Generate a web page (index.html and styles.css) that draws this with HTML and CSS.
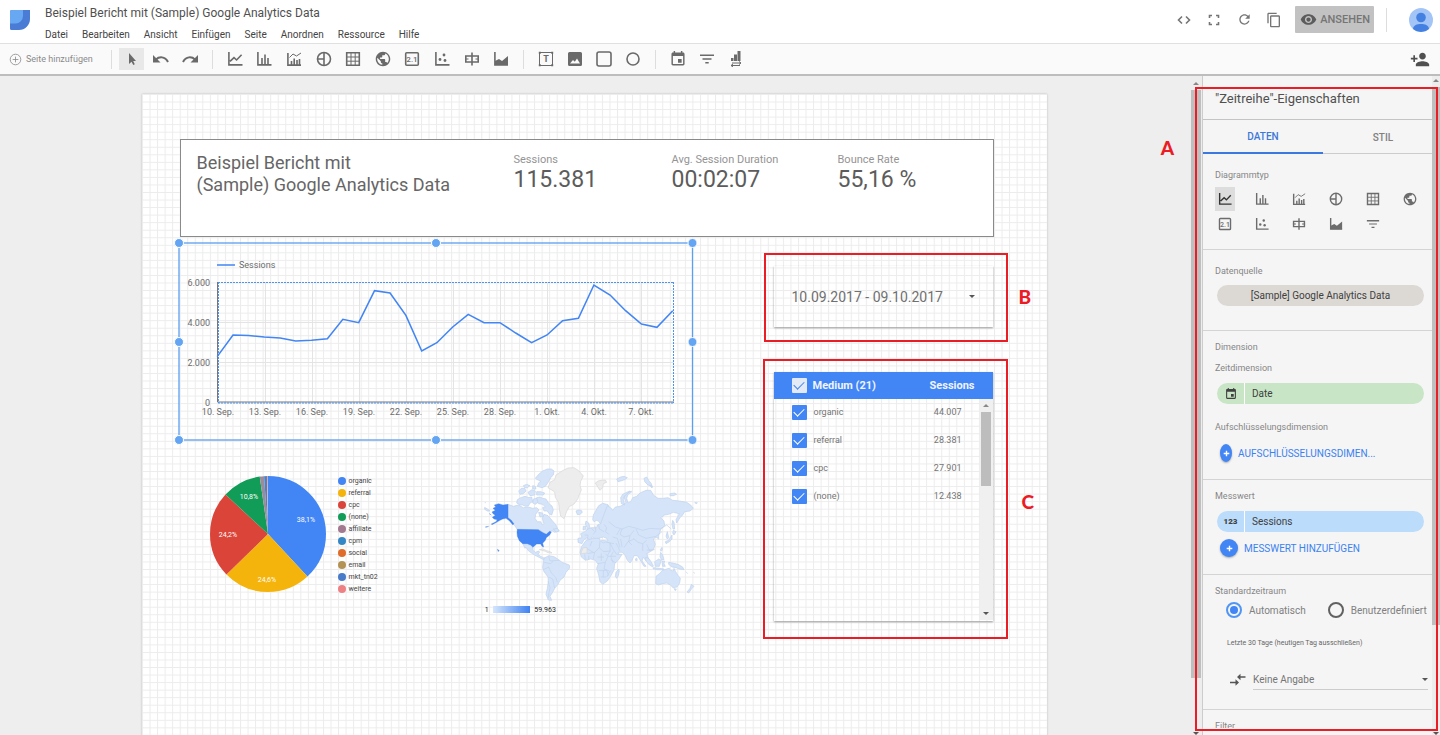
FILE: index.html
```html
<!DOCTYPE html>
<html lang="de">
<head>
<meta charset="utf-8">
<title>Beispiel Bericht mit (Sample) Google Analytics Data</title>
<link rel="stylesheet" href="styles.css">
</head>
<body>
<svg class="sprite" aria-hidden="true">
  <symbol id="i-line" viewBox="0 0 16 16"><path class="s" d="M1.9 1v12.9H15.5M3 10.4 7 6.6l2.6 2.4 5-5.2"/></symbol>
  <symbol id="i-bar" viewBox="0 0 16 16"><path class="s" d="M1.9 1v12.9H15.5M6 13V7M9 13V3.5M12 13V7"/></symbol>
  <symbol id="i-combo" viewBox="0 0 16 16"><path class="s" d="M1.9 2v12.1H15M5.5 14v-4M8.2 14V7.500M11 14V9M13.500 14V8"/><path class="t" d="M3.500 6.500 7 3l3.500 2L15 2"/></symbol>
  <symbol id="i-pie" viewBox="0 0 16 16"><circle class="s" cx="8" cy="8" r="6.500"/><path class="s" d="M8 1.500v13M1.500 8H8"/></symbol>
  <symbol id="i-table" viewBox="0 0 16 16"><path class="s" d="M1.700 1.700h12.600v12.600H1.700z"/><path class="t" d="M6 2v12M10.200 2v12M2 6h12M2 10.200h12"/></symbol>
  <symbol id="i-globe" viewBox="1 1 22 22"><path d="M12 2C6.480 2 2 6.480 2 12s4.480 10 10 10 10-4.480 10-10S17.520 2 12 2zm-1 17.930c-3.950-.49-7-3.850-7-7.930 0-.62.08-1.210.21-1.790L9 15v1c0 1.100.9 2 2 2v1.930zm6.900-2.540c-.26-.81-1-1.390-1.900-1.390h-1v-3c0-.55-.45-1-1-1H8v-2h2c.55 0 1-.45 1-1V7h2c1.100 0 2-.9 2-2v-.41c2.930 1.190 5 4.060 5 7.410 0 2.080-.8 3.970-2.100 5.390z"/></symbol>
  <symbol id="i-score" viewBox="0 0 16 16"><rect class="s" x="1.700" y="1.700" width="12.600" height="12.600" rx="1"/><text x="8" y="11.300" text-anchor="middle" class="glyph">2.1</text></symbol>
  <symbol id="i-scatter" viewBox="0 0 16 16"><path class="s" d="M1.900 1v12.900H15.500"/><circle cx="6" cy="8.500" r="1.400"/><circle cx="10" cy="4" r="1.400"/><circle cx="11" cy="9.500" r="1.400"/></symbol>
  <symbol id="i-bullet" viewBox="0 0 16 16"><path class="s" d="M1.800 5h12.400v6H1.800zM8 1.500v13"/><path d="M1 7.500h3.500v1H1zM11.500 7.500H15v1h-3.500z"/></symbol>
  <symbol id="i-area" viewBox="0 0 16 16"><path class="s" d="M1.900 1v12.900H15"/><path d="M2 14V10l4-2 3 2 6-5v9z"/></symbol>
  <symbol id="i-text" viewBox="0 0 16 16"><path class="t" d="M1.500 1.500h13v13h-13z"/><path d="M.8.800h2v2h-2zM13.200.800h2v2h-2zM.8 13.200h2v2h-2zM13.200 13.200h2v2h-2z"/><text x="8" y="11.300" text-anchor="middle" class="glyph glyph-t">T</text></symbol>
  <symbol id="i-image" viewBox="0 0 16 16"><path fill-rule="evenodd" d="M2.500 1h11A1.500 1.500 0 0 1 15 2.500v11a1.500 1.500 0 0 1-1.500 1.500h-11A1.500 1.500 0 0 1 1 13.500v-11A1.500 1.500 0 0 1 2.500 1zM3 12.500h10l-3-5-2.200 3.200L6 9z"/></symbol>
  <symbol id="i-rect" viewBox="0 0 16 16"><rect class="s" x="1" y="1" width="14" height="14" rx="2"/></symbol>
  <symbol id="i-circle" viewBox="0 0 16 16"><circle class="s" cx="8" cy="8" r="6"/></symbol>
  <symbol id="i-event" viewBox="2 1 20 22"><path d="M17 12h-5v5h5v-5zM16 1v2H8V1H6v2H5c-1.110 0-1.990.9-1.990 2L3 19c0 1.100.89 2 2 2h14c1.100 0 2-.9 2-2V5c0-1.100-.9-2-2-2h-1V1h-2zm3 18H5V8h14v11z"/></symbol>
  <symbol id="i-filter" viewBox="0 0 16 16"><path d="M1 3.500h14V5H1zM3.500 7.300h9v1.400h-9zM6.300 11h3.400v1.500H6.300z"/></symbol>
  <symbol id="i-manage" viewBox="0 0 16 16"><path d="M9.500 0h3v10h-3zM6 3.500h3V10H6zM3 7h2.500v3H3z"/><path class="t" d="M4 12h9M11 10.500l2 1.500-2 1.500M12 14.500H3M5 13l-2 1.500L5 16"/></symbol>
  <symbol id="i-undo" viewBox="0 0 18 16"><path class="w" d="M4 8.500C7 5.500 13 5 16 11"/><path d="M1 4v7.500h7.500z"/></symbol>
  <symbol id="i-redo" viewBox="0 0 18 16"><path class="w" d="M14 8.500C11 5.500 5 5 2 11"/><path d="M17 4v7.500H9.500z"/></symbol>
  <symbol id="i-cursor" viewBox="0 0 16 16"><path d="M5 2v11l2.500-2.300L9.300 14l1.500-.8L9.200 10H12z"/></symbol>
  <symbol id="i-addpage" viewBox="0 0 16 16"><circle class="t" cx="8" cy="8" r="6.500"/><path class="t" d="M8 4.500v7M4.500 8h7"/></symbol>
  <symbol id="i-code" viewBox="0 0 16 16"><path class="s" d="M6 4.500 2.500 8 6 11.500M10 4.500 13.500 8 10 11.500"/></symbol>
  <symbol id="i-full" viewBox="0 0 16 16"><path class="s" d="M6 3.500H3.500V6M10 3.500h2.500V6M6 12.500H3.500V10M10 12.500h2.500V10"/></symbol>
  <symbol id="i-refresh" viewBox="2 2 20 20"><path d="M17.650 6.350C16.200 4.900 14.210 4 12 4c-4.420 0-7.990 3.580-7.990 8s3.570 8 7.990 8c3.730 0 6.840-2.550 7.730-6h-2.080c-.82 2.330-3.040 4-5.650 4-3.310 0-6-2.690-6-6s2.690-6 6-6c1.660 0 3.140.69 4.220 1.780L13 11h7V4l-2.350 2.350z"/></symbol>
  <symbol id="i-copy" viewBox="1 0 22 24"><path d="M16 1H4c-1.100 0-2 .9-2 2v14h2V3h12V1zm3 4H8c-1.100 0-2 .9-2 2v14c0 1.100.9 2 2 2h11c1.100 0 2-.9 2-2V7c0-1.100-.9-2-2-2zm0 16H8V7h11v14z"/></symbol>
  <symbol id="i-eye" viewBox="0 3 24 18"><path d="M12 4.500C7 4.500 2.730 7.610 1 12c1.730 4.390 6 7.500 11 7.500s9.270-3.110 11-7.500c-1.730-4.390-6-7.500-11-7.500zM12 17c-2.760 0-5-2.240-5-5s2.240-5 5-5 5 2.240 5 5-2.240 5-5 5zm0-8c-1.660 0-3 1.340-3 3s1.340 3 3 3 3-1.340 3-3-1.340-3-3-3z"/></symbol>
  <symbol id="i-adduser" viewBox="0 3 24 18"><path d="M15 12c2.210 0 4-1.790 4-4s-1.790-4-4-4-4 1.790-4 4 1.790 4 4 4zm-9-2V7H4v3H1v2h3v3h2v-3h3v-2H6zm9 4c-2.670 0-8 1.340-8 4v2h16v-2c0-2.660-5.330-4-8-4z"/></symbol>
  <symbol id="i-compare" viewBox="0 0 16 16"><path class="s" d="M15.500 5H9.500M0 10.500H6"/><path d="M10.500 1.800V8.200L7 5zM5.500 7.300v6.400L9 10.500z"/></symbol>
  <symbol id="i-plus" viewBox="0 0 10 10"><path class="w" d="M5 1v8M1 5h8"/></symbol>
</svg>

<header class="header">
  <svg class="logo" viewBox="0 0 20 20" aria-hidden="true">
    <path d="M1.500 0H20v9A11 11 0 0 1 9 20H1.500A1.500 1.500 0 0 1 0 18.500v-17A1.500 1.500 0 0 1 1.500 0z" fill="#4a7cd6"/>
    <path d="M1.500 0H13v6A7.500 7.500 0 0 1 5.500 13.500H0v-12A1.500 1.500 0 0 1 1.500 0z" fill="#68a8f3"/>
  </svg>
  <div class="heading">
    <h1 class="doc-title">Beispiel Bericht mit (Sample) Google Analytics Data</h1>
    <nav class="menu">
      <button>Datei</button><button>Bearbeiten</button><button>Ansicht</button><button>Einfügen</button><button>Seite</button><button>Anordnen</button><button>Ressource</button><button>Hilfe</button>
    </nav>
  </div>
  <div class="actions">
    <button class="action" aria-label="Einbetten"><svg class="icon"><use href="#i-code"/></svg></button>
    <button class="action" aria-label="Vollbild"><svg class="icon"><use href="#i-full"/></svg></button>
    <button class="action" aria-label="Aktualisieren"><svg class="icon icon-s"><use href="#i-refresh"/></svg></button>
    <button class="action" aria-label="Kopieren"><svg class="icon"><use href="#i-copy"/></svg></button>
    <button class="view-btn"><svg class="eye"><use href="#i-eye"/></svg>ANSEHEN</button>
    <span class="action-sep"></span>
    <svg class="avatar" viewBox="0 0 24 24" role="img" aria-label="Konto"><circle cx="12" cy="12" r="12" fill="#a3c4f6"/><circle cx="12" cy="9.500" r="4.800" fill="#4380e2"/><path d="M4 20.900C4.500 17 8 16 12 16s7.500 1 8 4.900A12 12 0 0 1 4 20.900z" fill="#4380e2"/></svg>
  </div>
</header>

<div class="toolbar">
  <button class="add-page"><svg class="icon-xs"><use href="#i-addpage"/></svg>Seite hinzufügen</button>
  <span class="sep sep-first"></span>
  <div class="tools tools-3">
    <button class="tool active" aria-label="Auswählen"><svg class="icon"><use href="#i-cursor"/></svg></button>
    <button class="tool" aria-label="Rückgängig"><svg class="icon icon-w"><use href="#i-undo"/></svg></button>
    <button class="tool" aria-label="Wiederholen"><svg class="icon icon-w"><use href="#i-redo"/></svg></button>
  </div>
  <span class="sep"></span>
  <div class="tools tools-10">
    <button class="tool" aria-label="Zeitreihe"><svg class="icon"><use href="#i-line"/></svg></button>
    <button class="tool" aria-label="Balkendiagramm"><svg class="icon"><use href="#i-bar"/></svg></button>
    <button class="tool" aria-label="Kombinationsdiagramm"><svg class="icon"><use href="#i-combo"/></svg></button>
    <button class="tool" aria-label="Kreisdiagramm"><svg class="icon"><use href="#i-pie"/></svg></button>
    <button class="tool" aria-label="Tabelle"><svg class="icon"><use href="#i-table"/></svg></button>
    <button class="tool" aria-label="Karte"><svg class="icon"><use href="#i-globe"/></svg></button>
    <button class="tool" aria-label="Kurzübersicht"><svg class="icon"><use href="#i-score"/></svg></button>
    <button class="tool" aria-label="Streudiagramm"><svg class="icon"><use href="#i-scatter"/></svg></button>
    <button class="tool" aria-label="Bullet-Diagramm"><svg class="icon"><use href="#i-bullet"/></svg></button>
    <button class="tool" aria-label="Flächendiagramm"><svg class="icon"><use href="#i-area"/></svg></button>
  </div>
  <span class="sep"></span>
  <div class="tools tools-4">
    <button class="tool" aria-label="Text"><svg class="icon"><use href="#i-text"/></svg></button>
    <button class="tool" aria-label="Bild"><svg class="icon"><use href="#i-image"/></svg></button>
    <button class="tool" aria-label="Rechteck"><svg class="icon"><use href="#i-rect"/></svg></button>
    <button class="tool" aria-label="Kreis"><svg class="icon"><use href="#i-circle"/></svg></button>
  </div>
  <span class="sep"></span>
  <div class="tools tools-3">
    <button class="tool" aria-label="Zeitraum"><svg class="icon"><use href="#i-event"/></svg></button>
    <button class="tool" aria-label="Filter"><svg class="icon"><use href="#i-filter"/></svg></button>
    <button class="tool" aria-label="Datensteuerung"><svg class="icon"><use href="#i-manage"/></svg></button>
  </div>
  <button class="share" aria-label="Freigeben"><svg class="share-icon"><use href="#i-adduser"/></svg></button>
</div>

<main class="workspace">
  <section class="stage">
    <div class="canvas">
      <svg class="grid" aria-hidden="true">
        <defs><pattern id="dots" width="7.540" height="7.540" patternUnits="userSpaceOnUse"><path d="M0 .5H8M.5 0V8" stroke="#ececec" stroke-width="1"/></pattern></defs>
        <rect width="100%" height="100%" fill="url(#dots)"/>
      </svg>

      <section class="summary">
        <h2 class="summary-title">Beispiel Bericht mit<br>(Sample) Google Analytics Data</h2>
        <dl class="metric metric-1"><dt>Sessions</dt><dd>115.381</dd></dl>
        <dl class="metric metric-2"><dt>Avg. Session Duration</dt><dd>00:02:07</dd></dl>
        <dl class="metric"><dt>Bounce Rate</dt><dd>55,16 %</dd></dl>
      </section>

      <svg class="series" viewBox="-6 -6 526 209" role="img" aria-label="Sessions Zeitreihe">
        <g stroke="#e4e4e4"><path d="M86.500 39v120M133.500 39v120M180.500 39v120M227.500 39v120M274.500 39v120M321.500 39v120M368.500 39v120M415.500 39v120M462.500 39v120M39 79.500h456M39 119.500h456"/></g>
        <path d="M38.500 39v120H495" class="axis"/>
        <path d="M39 39.500H495M494.500 39v121M39 160H495M39.500 39v121" class="dotted"/>
        <path d="M38 22h18" class="curve"/>
        <g transform="translate(-9 -8) scale(.34436 .33333)"><polyline class="curve curve-scaled" points="137,365 183,300 228,301.500 274,306 320,309 365,318 411,316 457,311 502,253 548,263 594,167 639,174 685,241 731,348 775,323 821,276 866,238 912,263 958,263 1004,294 1050,323 1095,300 1140,257 1186,250 1231,150 1278,180 1323,227 1369,267 1414,277 1460,227"/></g>
        <g class="chart-text">
          <text x="60" y="25">Sessions</text>
          <g text-anchor="end"><text x="31" y="43">6.000</text><text x="31" y="83">4.000</text><text x="31" y="123">2.000</text><text x="31" y="163">0</text></g>
          <g text-anchor="middle"><text x="39" y="172">10. Sep.</text><text x="86" y="172">13. Sep.</text><text x="133" y="172">16. Sep.</text><text x="180" y="172">19. Sep.</text><text x="227" y="172">22. Sep.</text><text x="274" y="172">25. Sep.</text><text x="321" y="172">28. Sep.</text><text x="368" y="172">1. Okt.</text><text x="415" y="172">4. Okt.</text><text x="462" y="172">7. Okt.</text></g>
        </g>
        <rect x="0" y="0" width="513.500" height="197" class="select-box"/>
        <g class="handles"><circle cx="0" cy="0" r="4.500"/><circle cx="257" cy="0" r="4.500"/><circle cx="513.500" cy="0" r="4.500"/><circle cx="0" cy="99" r="4.500"/><circle cx="513.500" cy="99" r="4.500"/><circle cx="0" cy="197" r="4.500"/><circle cx="257" cy="197" r="4.500"/><circle cx="513.500" cy="197" r="4.500"/></g>
      </svg>

      <section class="pie-widget">
        <svg class="pie" viewBox="0 0 116 116" role="img" aria-label="Sessions nach Medium">
          <g class="slices" transform="rotate(-90 58 58)">
            <circle cx="58" cy="58" r="29" pathLength="100" stroke="#4285f4" stroke-dasharray="38.100 61.900"/>
            <circle cx="58" cy="58" r="29" pathLength="100" stroke="#f4b40c" stroke-dasharray="24.600 75.400" stroke-dashoffset="-38.100"/>
            <circle cx="58" cy="58" r="29" pathLength="100" stroke="#db4439" stroke-dasharray="24.200 75.800" stroke-dashoffset="-62.700"/>
            <circle cx="58" cy="58" r="29" pathLength="100" stroke="#119d58" stroke-dasharray="10.800 89.200" stroke-dashoffset="-86.900"/>
            <circle cx="58" cy="58" r="29" pathLength="100" stroke="#9a8c9c" stroke-dasharray="1.200 98.800" stroke-dashoffset="-97.700"/>
            <circle cx="58" cy="58" r="29" pathLength="100" stroke="#4a83c9" stroke-dasharray=".800 99.200" stroke-dashoffset="-98.900"/>
            <circle cx="58" cy="58" r="29" pathLength="100" stroke="#e8a79a" stroke-dasharray=".300 99.700" stroke-dashoffset="-99.700"/>
          </g>
          <g class="pie-text" text-anchor="middle"><text x="96" y="46">38,1%</text><text x="57" y="106">24,6%</text><text x="18" y="61">24,2%</text><text x="39" y="23">10,8%</text></g>
        </svg>
        <ul class="legend">
          <li><i class="dot c1"></i>organic</li><li><i class="dot c2"></i>referral</li><li><i class="dot c3"></i>cpc</li><li><i class="dot c4"></i>(none)</li><li><i class="dot c5"></i>affiliate</li><li><i class="dot c6"></i>cpm</li><li><i class="dot c7"></i>social</li><li><i class="dot c8"></i>email</li><li><i class="dot c9"></i>mkt_tn02</li><li><i class="dot c10"></i>weitere</li>
        </ul>
      </section>

      <svg class="map" viewBox="0 0 750 510" role="img" aria-label="Sessions nach Land">
        <defs><linearGradient id="scale"><stop offset="0" stop-color="#d6e6fb"/><stop offset="1" stop-color="#3f82f3"/></linearGradient></defs>
        <g class="land">
          <path d="M114 148l16 6 15-4 15 8 15-2 13 4 12-2 7 7-10 13-2 12 7 10 10 0 5 10 5-4-5-16 5-12 12 4 12 14 12 14 8 18-12 4-6-4-10 1-8 9-16-8-9-6H142l-7-11-13-17-8-7z"/>
          <path d="M200 128l10-2 8 4 10 2 8 13 10 8 4 12-5 15-8-4-5-8-10 0-4-10 8-2-8-8-12-2-8-8z"/>
          <path d="M142 134l10-6 13-4 12 4 8-2 3 14-8 4-4 8-10 2-8-4-8 0-10-6z"/>
          <path d="M196 70l10-12 12-10 14-6 12 0 8 6-2 12-8 8-4 8-6 10-6 8-10 4-14-4 4-10 6-6-10-4z"/>
          <path d="M146 108l8-8 10 0 4 8-8 8-10 2zM160 92l10-4 10 4-8 6-8 0zM174 112l12-8 10 4-2 12-14 2zM200 110l12 0 12 4-4 6-20 0zM190 132l10-2 4 12-8 6-8-4zM188 92l8 2 2 8-10 0zM206 172l12 2 2 10-10 2z"/>
          <path d="M318 168l6-3 10 1 3 6-7 6-8 1zM250 222l12-2 6 8-10 3z"/>
          <path d="M158 265h14l10 5 7 6 0 10 7 6 10-4 3 4-6 6 9 6 8 4 9 2-8 4-16-8-15-8-14-10-9-12-2 4z"/>
          <path d="M208 284l10-2 12 5 10 3 6 4-12-1-8-4-10-3z" class="nil"/>
          <path d="M222 310l14-8 16 3 14 9 10 8 22 8 1 9-11 13-6 14-12 10-6 12-10 12-6 12-8 12 5 12-10-1-7-17 4-18 3-20-1-14-12-16-4-12z"/>
          <path d="M222 322l20 4 8-8M236 304l4 14 28-2M220 344l16-8 8 18 14 14 4 14M236 366l12 6 6 28M234 378l6 20-6 32" class="border"/>
          <path d="M368 194l2-14 8-14 8-14 12-7 16 4 4 8-4 10-8 12-4 10-2 14-8 4-6-8-6-3-8 4zM348 198l8 6 4 14 4 6-14 4 2-10-6-10zM340 214l8 0-1 9-8 2z"/>
          <path d="M412 152l12 8 4 6 8-10 14-2 12-6 6-6-6-16 8-10 14-8 0 4-10 6-4 12 4 14 8-4 6-12 12-4 10-10 18-8 14 0 8 14 14 10 14 0 16-2 14 8 20 2 22 4 12 8 8 10-10 8-16 2-6 10-8 8-10 16-2-10 10-18-18-4-14 6-12 2-12 8 10 10 2 14-12 12-6 18 0 10-8-6-8 6 6 16-6 16-12 8-8 4 6 16-8 6-8-12-4 12 12 16-6 0-12-20-8-12-10 0-6 14-6 8-8-8-8-18-8-6-12 0 6 10-12 12-10 6-10-10-10-26-4-10 6-6-16 0-8-6 10-6 18 2-4-8-10-4-14 4-2 10-8-4-8-10-4 2 6 12-8-4-10-8-10 6-6 12-12-4 0-12 12-2-4-12 12-6 10-8 10-4 16 0 2-8 10-4 4-12z"/>
          <path d="M402 208l8 10-4 12 10 8M374 212l4 16-8 10M386 208l2 14 14 8M364 220l10 10M344 240h10l-2 14M416 200l20 16 20 6 20-8 24 6 18 6 22-6 30 2 20-12 14 12M440 240l10-18M456 222l-6 16 12 8 18-4 12-16M428 246l14 4 8 28M452 252l4 24M480 242l-4 18 10 10M462 278l12-18 18-8M498 222l8 18 22 10 30-6 18-14M490 250l14 12 14 4 12-10M518 266l0 22M530 268l8 18 16-2M438 264l12 24M412 262l20 4M546 285l-16 0" class="border"/>
          <path d="M348 256l22-6h18l3 8 9 6 6-3 14 3 10 20 10 14 16 0-10 16-12 12-2 19-8 15-12 18-14 10-8-8-4-20-6-20 4-12-8-12-14-4-16 4-12-10-4-14 4-16z"/>
          <path d="M346 278l24 14M390 258l-2 20 12 12 22-2M420 264v24l-8 14M352 296l22-4 14-14M374 292l-4 20M384 326l22-4 8-18M406 322l-4 20 16 6M386 346h24l6 16M392 366l16 0M344 298l2 16M356 302v12M394 296v22M406 296l8 8 24 0M422 314l16 10M366 258l-6 16M402 306h-20M430 290l-8 14 8 20M400 346v20M422 346l-12 20" class="border"/>
          <path d="M438 352l8-10 2 6-3 14-5 8-4-6z"/>
          <path d="M452 128l6-10 12-6 10-4-8 8-10 8-2 10 4 16-10-4zM440 72l12-6 10-2 10 4-8 6-12 4-8 2zM522 70l8-4 6 10 8 10 2 8-12-4-10-10zM600 116l14-2 6 4-10 4-10 0zM674 143l8 0-2 3zM540 92l8 2-2 5z"/>
          <path d="M608 196l4 6 2 20-5 0-3-14zM610 226l8 4-6 10-4-6zM606 240l0 12-8 8-10 6-2-6 10-4 6-10zM592 230l-4 14 4 8 4-4zM571 284l5-7 1 8-4 4zM572 292l6 8 4 14-8 0-4-10zM528 306l10 6 12 20-2 4-12-8-10-14zM554 320l12-8 8 4-6 18-12 0zM576 320l8-2-2 8 4 8-8 0zM550 338l18 2 14 2-2 3-20-1-11-3zM596 322l12 2 16 4 14 8 4 8-14-2-10-4-12-2-10-8zM496 312l4-3 2 7-4 2z"/>
          <path d="M558 364l10-8 10-10 12-4 8-2 4 6 8 2 2-8 5 10 6 10 8 10-2 14-8 12-12 2-8-8-10-6-14 2-12 4-8-4z"/>
          <path d="M612 401l7 1-3 5zM664 388l8 6-6 6-10 14-5-3 9-11zM648 350l5 6M670 352l5 3M44 143l4 0M84 284l4 3-3 3z"/>
        </g>
        <path class="nil" d="M234 98l6-16 14-8 4-14 18-12 18-9 18-1 14 9 14 16-8 16-2 12 4 14-8 18-2 8-12 16-14 8-8 14-8 22-10-8-4-20-2-20-10-16-2-16zM376 84l8-6 10-2 12-1 4 7-10 4-2 12-8 8-8-12zM334 290l6-12h11v16l-17 2z"/>
        <path class="usa" d="M114 148v40l10 8 8 11-4 2-10-12-10-7-10 2-8 4-10 6-14 7-2-2 14-7 4-6-10-2-5-5 9-6-6-4-4-6 10-5-7-6 8-4-4-6 13-4 13 4zM142 223l63 1 9 6 8 5 7 3 10-9 5 2-5 9-10 8-3 8-8 9 3 11-5-2-4-7-12 0-6 5-5 5-7-7-10-4H158l-10-9-6-13-1-12zM46 216l10-2-8 3zM58 176l6 4zM82 283l5 4-2 2z"/>
        <path class="land" d="M44 157l16 10-6 2-10-6z"/>
        <rect x="69" y="453" width="111" height="21" fill="url(#scale)"/>
        <g class="map-text"><text x="44" y="471">1</text><text x="193" y="471">59.963</text></g>
      </svg>

      <button class="date-range"><span>10.09.2017 - 09.10.2017</span><i class="caret"></i></button>

      <section class="filter-list">
        <table>
          <thead><tr><th scope="col"><label><input type="checkbox" class="check check-light" checked>Medium (21)</label></th><th scope="col" class="num">Sessions</th></tr></thead>
          <tbody>
            <tr><td><label><input type="checkbox" class="check" checked>organic</label></td><td class="num">44.007</td></tr>
            <tr><td><label><input type="checkbox" class="check" checked>referral</label></td><td class="num">28.381</td></tr>
            <tr><td><label><input type="checkbox" class="check" checked>cpc</label></td><td class="num">27.901</td></tr>
            <tr><td><label><input type="checkbox" class="check" checked>(none)</label></td><td class="num">12.438</td></tr>
          </tbody>
        </table>
        <div class="list-scroll"><i class="up"></i><i class="list-thumb"></i><i class="down"></i></div>
      </section>

      <div class="mark mark-b"></div><b class="mark-label label-b">B</b>
      <div class="mark mark-c"></div><b class="mark-label label-c">C</b>
    </div>
    <b class="mark-label label-a">A</b>
  </section>
  <div class="scroll stage-scroll"><i class="up"></i><i class="thumb"></i><i class="down"></i></div>

  <aside class="panel">
    <div class="panel-body">
      <h2 class="panel-title">"Zeitreihe"-Eigenschaften</h2>
      <div class="tabs" role="tablist"><button role="tab" aria-selected="true" class="tab selected">DATEN</button><button role="tab" aria-selected="false" class="tab">STIL</button></div>

      <section class="group group-type">
        <h3>Diagrammtyp</h3>
        <div class="types">
          <button class="type chosen" aria-label="Zeitreihe"><svg><use href="#i-line"/></svg></button>
          <button class="type" aria-label="Balkendiagramm"><svg><use href="#i-bar"/></svg></button>
          <button class="type" aria-label="Kombinationsdiagramm"><svg><use href="#i-combo"/></svg></button>
          <button class="type" aria-label="Kreisdiagramm"><svg><use href="#i-pie"/></svg></button>
          <button class="type" aria-label="Tabelle"><svg><use href="#i-table"/></svg></button>
          <button class="type" aria-label="Karte"><svg><use href="#i-globe"/></svg></button>
          <button class="type" aria-label="Kurzübersicht"><svg><use href="#i-score"/></svg></button>
          <button class="type" aria-label="Streudiagramm"><svg><use href="#i-scatter"/></svg></button>
          <button class="type" aria-label="Bullet-Diagramm"><svg><use href="#i-bullet"/></svg></button>
          <button class="type" aria-label="Flächendiagramm"><svg><use href="#i-area"/></svg></button>
          <button class="type" aria-label="Filter"><svg><use href="#i-filter"/></svg></button>
        </div>
      </section>

      <section class="group group-source">
        <h3>Datenquelle</h3>
        <button class="pill pill-gray">[Sample] Google Analytics Data</button>
      </section>

      <section class="group group-fields">
        <h3>Dimension</h3>
        <h3>Zeitdimension</h3>
        <button class="pill pill-green"><span class="pill-icon"><svg><use href="#i-event"/></svg></span>Date</button>
        <h3 class="spaced">Aufschlüsselungsdimension</h3>
        <button class="add"><span class="plus plus-narrow"><svg><use href="#i-plus"/></svg></span>AUFSCHLÜSSELUNGSDIMEN...</button>
      </section>

      <section class="group group-fields">
        <h3>Messwert</h3>
        <button class="pill pill-blue"><span class="pill-icon">123</span>Sessions</button>
        <button class="add add-tight"><span class="plus"><svg><use href="#i-plus"/></svg></span>MESSWERT HINZUFÜGEN</button>
      </section>

      <section class="group group-range">
        <h3>Standardzeitraum</h3>
        <div class="radios">
          <label><input type="radio" name="range" class="radio" checked>Automatisch</label>
          <label><input type="radio" name="range" class="radio">Benutzerdefiniert</label>
        </div>
        <p class="note">Letzte 30 Tage (heutigen Tag ausschließen)</p>
        <div class="compare">
          <svg class="icon"><use href="#i-compare"/></svg>
          <div class="select-wrap"><select class="select" aria-label="Vergleichszeitraum"><option>Keine Angabe</option></select><i class="down"></i></div>
        </div>
      </section>

      <section class="group group-filter"><h3>Filter</h3></section>
    </div>
    <div class="scroll panel-scroll"><i class="up"></i><i class="thumb"></i><i class="down"></i></div>
    <div class="mark mark-a"></div>
  </aside>
</main>
</body>
</html>
```
FILE: styles.css
```css
* { box-sizing: border-box; margin: 0; padding: 0; }
body { display: flex; flex-direction: column; height: 100vh; overflow: hidden; background: #fff; color: #555; font-family: Roboto, "Liberation Sans", sans-serif; font-size: 12px; }
button { display: flex; align-items: center; border: 0; background: none; color: inherit; font: inherit; cursor: pointer; }
i { display: block; }
.sprite { display: none; }
.s, .t, .w { fill: none; stroke: currentColor; stroke-width: 1.6; }
.t { stroke-width: 1; }
.w { stroke-width: 2; }
svg { fill: currentColor; }
.glyph { font: 500 8px Roboto, sans-serif; }
.glyph-t { font-size: 9px; font-weight: 700; }

/* header */
.header { display: flex; flex: none; height: 44px; padding: 0 7px 0 10px; border-bottom: 1px solid #e0e0e0; }
.logo { width: 20px; height: 20px; margin-top: 10px; }
.heading { flex: 1; padding: 4px 0 0 15px; }
.doc-title { color: #505050; font-size: 12px; font-weight: 400; line-height: 18px; }
.menu { display: flex; gap: 14px; margin-top: 6px; }
.menu button { color: #444; font-size: 10px; line-height: 13px; }
.actions { display: flex; align-items: center; height: 39px; color: #757575; }
.action { justify-content: center; width: 30px; height: 30px; }
.icon { width: 16px; height: 16px; }
.icon-s { width: 13px; height: 13px; }
.icon-w { width: 18px; }
.icon-xs { width: 13px; height: 13px; }
.view-btn { gap: 3px; height: 27px; margin-left: 6px; padding: 0 4px 0 5px; border-radius: 1px; background: #c2c2c2; color: #757575; font-size: 11px; font-weight: 500; }
.eye { width: 17px; height: 13px; color: #5c5c5c; }
.action-sep { width: 1px; height: 24px; margin: 0 22px 0 12px; background: #ddd; }
.avatar { width: 24px; height: 24px; }

/* toolbar */
.toolbar { display: flex; flex: none; align-items: center; height: 32px; padding: 0 10px 0 9px; border-bottom: 2px solid #bdbdbd; background: #fafafa; color: #6a6a6a; }
.add-page { gap: 4px; width: 102px; color: #8a8a8a; font-size: 9px; }
.sep { width: 1px; height: 19px; margin: 0 7px; background: #ddd; }
.sep-first { margin: 0 5px 0 0; }
.tools { display: grid; grid-auto-flow: column; grid-auto-columns: 1fr; justify-items: center; }
.tools-3 { width: 88px; }
.tools-4 { width: 117px; }
.tools-10 { width: 296px; }
.tool { justify-content: center; width: 25px; height: 22px; }
.active { background: #e8e8e8; }
.share { margin-left: auto; color: #505050; }
.share-icon { width: 20px; height: 15px; }

/* workspace */
.workspace { display: flex; flex: 1; min-height: 0; background: #eee; }
.stage { position: relative; flex: 1; overflow: hidden; padding: 18px 2px 0 0; }
.canvas { position: relative; width: 905px; height: 900px; margin: 0 auto; background: #fff; box-shadow: 0 0 2px #bbb; }
.grid { display: block; width: 100%; height: 100%; }

.summary { position: absolute; top: 45px; left: 38px; display: flex; width: 814px; height: 98px; padding: 12px 0 0 16px; border: 1px solid #8a8a8a; background: #fff; color: #666; }
.summary-title { width: 317px; font-size: 18px; font-weight: 400; line-height: 22px; }
.metric { color: #5c5c5c; }
.metric-1 { width: 158px; }
.metric-2 { width: 166px; }
.metric dt { color: #949494; font-size: 11px; line-height: 15px; }
.metric dd { font-size: 23px; line-height: 26px; }

.series { position: absolute; top: 143px; left: 31px; width: 526px; height: 209px; }
.curve { fill: none; stroke: #4285f4; stroke-width: 1.5; }
.curve-scaled { stroke-width: 4.5; }
.axis { fill: none; stroke: #777; }
.dotted { fill: none; stroke: #4f93f0; stroke-dasharray: 2 1; }
.chart-text { fill: #6c6c6c; font-size: 9px; }
.select-box { fill: none; stroke: #5b9ff0; stroke-width: 1.3; }
.handles { fill: #64a5f3; stroke: #fff; }

.pie-widget { position: absolute; top: 381px; left: 68px; display: flex; gap: 12px; align-items: flex-start; }
.pie { width: 116px; height: 116px; margin-top: 1px; }
.slices circle { fill: none; stroke-width: 58; }
.pie-text { fill: #fff; font-size: 7px; }
.legend { list-style: none; color: #444; font-size: 7px; line-height: 12px; }
.legend li { display: flex; gap: 3px; align-items: center; }
.dot { width: 8px; height: 8px; border-radius: 50%; }
.c1 { background: #4285f4; } .c2 { background: #f4b40c; } .c3 { background: #db4439; } .c4 { background: #119d58; } .c5 { background: #a3798f; }
.c6 { background: #3586c4; } .c7 { background: #df6c29; } .c8 { background: #b39253; } .c9 { background: #4a7bc8; } .c10 { background: #ee8184; }

.map { position: absolute; top: 361px; left: 328px; width: 250px; height: 170px; }
.land { fill: #d5e4f9; stroke: #c0d1ec; stroke-width: 2; }
.border { fill: none; }
.nil { fill: #ededed; stroke: #d6d6d6; stroke-width: 2; }
.usa { fill: #4285f4; stroke: #3e7de6; }
.map-text { fill: #222; font-size: 21px; }

.date-range { position: absolute; top: 172px; left: 632px; justify-content: space-between; width: 219px; height: 61px; padding: 0 18px 0 18px; box-shadow: 0 1px 2px #999; color: #707070; font-size: 14px; }
.caret { border: 3px solid transparent; border-top-color: #555; border-bottom: 0; }

.filter-list { position: absolute; top: 278px; left: 632px; width: 219px; height: 249px; box-shadow: 0 1px 2px #999; }
.filter-list table { width: 100%; border-collapse: collapse; color: #757575; font-size: 9px; }
.filter-list th { height: 27px; background: #4285f4; color: #f0f4fd; font-size: 11px; text-align: left; }
.filter-list td { height: 28px; padding-bottom: 2px; }
.filter-list label { display: flex; gap: 7px; align-items: center; padding-left: 18px; }
.filter-list th label { gap: 6px; }
.filter-list .num { padding-right: 31px; text-align: right; }
.filter-list th.num { padding-right: 18px; }
.check { display: grid; place-items: center; width: 15px; height: 15px; border-radius: 1px; background: #4285f4; color: #fff; appearance: none; }
.check::after { width: 9px; height: 5px; margin-top: -3px; border: solid currentColor; border-width: 0 0 1px 1px; content: ""; transform: rotate(-45deg); }
.check-light { background: #e3e9f5; color: #4285f4; }
.list-scroll { position: absolute; top: 27px; right: 0; bottom: 1px; display: flex; flex-direction: column; align-items: center; width: 13px; padding: 5px 0; background: #f0f0f0; }
.list-thumb { width: 10px; height: 74px; margin-top: 5px; background: #bdbdbd; }
.list-scroll .down { margin-top: auto; }
.up { border: 3px solid transparent; border-top: 0; border-bottom-color: #888; }
.down { border: 3px solid transparent; border-top-color: #555; border-bottom: 0; }

/* scrollbars */
.scroll { display: flex; flex: none; flex-direction: column; align-items: center; background: #ededed; }
.thumb { width: 10px; background: #bfbfbf; }
.stage-scroll { width: 12px; padding: 6px 0 0; }
.stage-scroll .thumb { flex: 0 0 90%; margin-top: 5px; }
.scroll .down { margin-top: auto; }
.panel-scroll { width: 8px; padding: 3px 0 0; }
.panel-scroll .thumb { flex: 0 0 82%; width: 8px; margin-top: 5px; }

/* highlight frames */
.mark { position: absolute; border: 2px solid #ec1c24; pointer-events: none; }
.mark-a { top: 11px; right: 2px; bottom: 4px; left: -8px; }
.mark-b { top: 159px; left: 622px; width: 244px; height: 89px; }
.mark-c { top: 265px; left: 621px; width: 245px; height: 280px; }
.mark-label { position: absolute; color: #ec1c24; font: 900 19px/24px Lato, sans-serif; }
.label-a { top: 60px; right: 16px; }
.label-b { top: 191px; left: 877px; }
.label-c { top: 396px; left: 880px; }

/* properties panel */
.panel { position: relative; display: flex; flex: none; width: 238px; border-left: 1px solid #ccc; background: #f5f5f5; }
.panel-body { flex: 1; min-width: 0; margin-bottom: 7px; overflow: hidden; }
.panel-title { height: 44px; padding: 13px 12px 0; border-bottom: 1px solid #c4c4c4; color: #505050; font-size: 13px; font-weight: 400; line-height: 20px; }
.tabs { display: flex; height: 34px; border-bottom: 1px solid #ccc; }
.tab { flex: 0 0 120px; justify-content: center; height: 34px; color: #808080; font-size: 10px; font-weight: 500; }
.selected { border-bottom: 2px solid #3b78e0; color: #3b78d8; }
.group { display: flex; flex-direction: column; align-items: flex-start; padding: 10px 8px 15px 12px; border-bottom: 1px solid #d4d4d4; }
.group h3 { color: #868686; font-size: 9px; font-weight: 400; line-height: 12px; }
.group-type { gap: 6px; padding: 15px 0 13px 12px; }
.types { display: grid; grid-template-columns: repeat(6, 37px); gap: 1px 0; }
.type { justify-content: center; width: 20px; height: 24px; color: #6c6c6c; }
.type svg { width: 14px; height: 14px; }
.chosen { background: #ddd; color: #333; }
.group-source { gap: 8px; padding-top: 15px; padding-bottom: 24px; }
.group-fields { gap: 9px; }
.group h3.spaced { margin-top: 8px; }
.pill { align-self: stretch; height: 21px; margin-left: 2px; border-radius: 11px; color: #404040; font-size: 10px; }
.pill-gray { justify-content: center; background: #dcd9d5; }
.pill-green { background: #c8e6c5; }
.pill-blue { background: #bbdcfa; }
.pill-icon { display: flex; align-items: center; justify-content: center; width: 28px; height: 21px; margin-right: 7px; border-right: 1px solid #fff; font-size: 8px; font-weight: 900; }
.pill-icon svg { width: 12px; height: 12px; }
.add { gap: 6px; height: 22px; margin-left: 5px; color: #3b82f0; font-size: 10px; }
.add-tight { margin-top: -4px; }
.plus { display: flex; align-items: center; justify-content: center; width: 18px; height: 18px; border-radius: 50%; background: #4285f4; box-shadow: 0 1px 2px #aaa; color: #fff; }
.plus-narrow { width: 12px; }
.plus svg { width: 7px; height: 7px; }
.group-range { padding-bottom: 19px; }
.radios { display: flex; gap: 22px; margin-top: 5px; padding-left: 11px; white-space: nowrap; }
.radios label { display: flex; gap: 7px; align-items: center; color: #808080; font-size: 10px; }
.radio { display: grid; place-items: center; width: 16px; height: 16px; border: 2px solid #616161; border-radius: 50%; appearance: none; }
.radio:checked { border-color: #4f96f6; }
.radio:checked::after { width: 8px; height: 8px; border-radius: 50%; background: #4285f4; content: ""; }
.note { margin-top: 19px; padding-left: 12px; color: #666; font-size: 7px; line-height: 12px; }
.compare { display: flex; gap: 7px; align-items: center; align-self: stretch; margin-top: 21px; padding-left: 15px; }
.select-wrap { display: flex; flex: 1; align-items: center; margin-right: -4px; border-bottom: 1px solid #ccc; }
.select { flex: 1; height: 19px; border: 0; background: none; color: #757575; font: 10px Roboto, sans-serif; appearance: none; }
.group-filter { border: 0; }
```
